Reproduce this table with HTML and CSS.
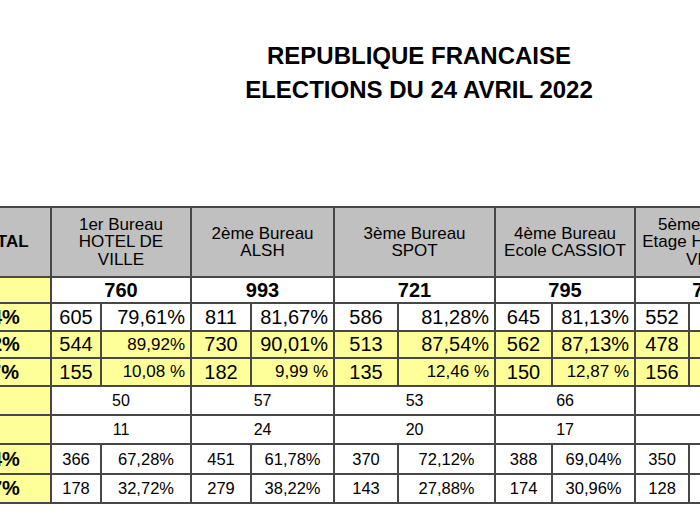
FILE: index.html
```html
<!DOCTYPE html>
<html lang="fr">
<head>
<meta charset="utf-8">
<title>Elections du 24 avril 2022</title>
<link rel="stylesheet" href="styles.css">
</head>
<body>
<div class="page">
  <h1 class="title">REPUBLIQUE FRANCAISE<br>ELECTIONS DU 24 AVRIL 2022</h1>
  <table class="results">
    <colgroup>
      <col class="w-total">
      <col class="w-50"><col class="w-90">
      <col class="w-60"><col class="w-83">
      <col class="w-64"><col class="w-97">
      <col class="w-57"><col class="w-83">
      <col class="w-54"><col class="w-94">
    </colgroup>
    <thead>
      <tr class="r-head">
        <th class="total-head">TOTAL</th>
        <th colspan="2">1er Bureau<br>HOTEL DE<br>VILLE</th>
        <th colspan="2">2ème Bureau<br>ALSH</th>
        <th colspan="2">3ème Bureau<br>SPOT</th>
        <th colspan="2">4ème Bureau<br>Ecole CASSIOT</th>
        <th colspan="2">5ème Bureau<br>Etage HOTEL DE<br>VILLE</th>
      </tr>
    </thead>
    <tbody>
      <tr class="r-inscrits">
        <td class="tot"></td>
        <td colspan="2" class="bold">760</td>
        <td colspan="2" class="bold">993</td>
        <td colspan="2" class="bold">721</td>
        <td colspan="2" class="bold">795</td>
        <td colspan="2" class="bold">738</td>
      </tr>
      <tr class="r-votants big">
        <td class="tot">80,34%</td>
        <td class="num">605</td><td class="pct">79,61%</td>
        <td class="num">811</td><td class="pct">81,67%</td>
        <td class="num">586</td><td class="pct">81,28%</td>
        <td class="num">645</td><td class="pct">81,13%</td>
        <td class="num">552</td><td class="pct">74,80%</td>
      </tr>
      <tr class="r-exprimes big yellow">
        <td class="tot">88,72%</td>
        <td class="num">544</td><td class="pct small">89,92%</td>
        <td class="num">730</td><td class="pct">90,01%</td>
        <td class="num">513</td><td class="pct">87,54%</td>
        <td class="num">562</td><td class="pct">87,13%</td>
        <td class="num">478</td><td class="pct">86,59%</td>
      </tr>
      <tr class="r-nuls big yellow">
        <td class="tot">11,27%</td>
        <td class="num">155</td><td class="pct small">10,08 %</td>
        <td class="num">182</td><td class="pct small">9,99 %</td>
        <td class="num">135</td><td class="pct small">12,46 %</td>
        <td class="num">150</td><td class="pct small">12,87 %</td>
        <td class="num">156</td><td class="pct small">13,41 %</td>
      </tr>
      <tr class="r-blancs mid">
        <td class="tot"></td>
        <td colspan="2">50</td>
        <td colspan="2">57</td>
        <td colspan="2">53</td>
        <td colspan="2">66</td>
        <td colspan="2"></td>
      </tr>
      <tr class="r-nuls2 mid">
        <td class="tot"></td>
        <td colspan="2">11</td>
        <td colspan="2">24</td>
        <td colspan="2">20</td>
        <td colspan="2">17</td>
        <td colspan="2"></td>
      </tr>
      <tr class="r-cand1 low">
        <td class="tot">68,84%</td>
        <td>366</td><td>67,28%</td>
        <td>451</td><td>61,78%</td>
        <td>370</td><td>72,12%</td>
        <td>388</td><td>69,04%</td>
        <td>350</td><td>73,22%</td>
      </tr>
      <tr class="r-cand2 low">
        <td class="tot">31,17%</td>
        <td>178</td><td>32,72%</td>
        <td>279</td><td>38,22%</td>
        <td>143</td><td>27,88%</td>
        <td>174</td><td>30,96%</td>
        <td>128</td><td>26,78%</td>
      </tr>
    </tbody>
  </table>
</div>
</body>
</html>
```

FILE: styles.css
```css
html, body {
  margin: 0;
  padding: 0;
  overflow: hidden;
  background: #ffffff;
}

body {
  font-family: "Liberation Sans", Arial, sans-serif;
  color: #000000;
}

.title {
  margin: 39px 0 0;
  padding-left: 138px;
  text-align: center;
  font-size: 24px;
  line-height: 34px;
  font-weight: bold;
}

.results {
  margin: 99px 0 0 -50px;
  border-collapse: collapse;
  table-layout: fixed;
  width: 832px;
}

.results th,
.results td {
  border: 2px solid #474747;
  padding: 0;
  text-align: center;
  white-space: nowrap;
  overflow: hidden;
}

.w-total { width: 100px; }
.w-50 { width: 50px; }
.w-90 { width: 90px; }
.w-60 { width: 60px; }
.w-83 { width: 83px; }
.w-64 { width: 64px; }
.w-97 { width: 97px; }
.w-57 { width: 57px; }
.w-54 { width: 54px; }
.w-94 { width: 94px; }

.r-head th {
  height: 68px;
  background: #c0c0c0;
  font-size: 17px;
  line-height: 17.5px;
  font-weight: normal;
}

.r-head .total-head {
  font-weight: bold;
}

.results td.tot {
  background: #ffff99;
  text-align: right;
  padding-right: 31px;
  font-weight: bold;
  font-size: 20px;
}

.r-inscrits td { height: 24px; font-size: 20px; }
.r-votants td { height: 26px; }
.r-exprimes td { height: 25px; }
.r-nuls td { height: 26px; }
.r-blancs td { height: 27px; }
.r-nuls2 td { height: 27px; }
.r-cand1 td { height: 28px; }
.r-cand2 td { height: 27px; }

.bold { font-weight: bold; }

.big td { font-size: 20px; }
.yellow td { background: #ffff99; }

.results td.pct {
  text-align: right;
  padding-right: 5px;
}

.results td.small { font-size: 17px; }

.mid td { font-size: 16px; }
.low td { font-size: 16.5px; }
```
